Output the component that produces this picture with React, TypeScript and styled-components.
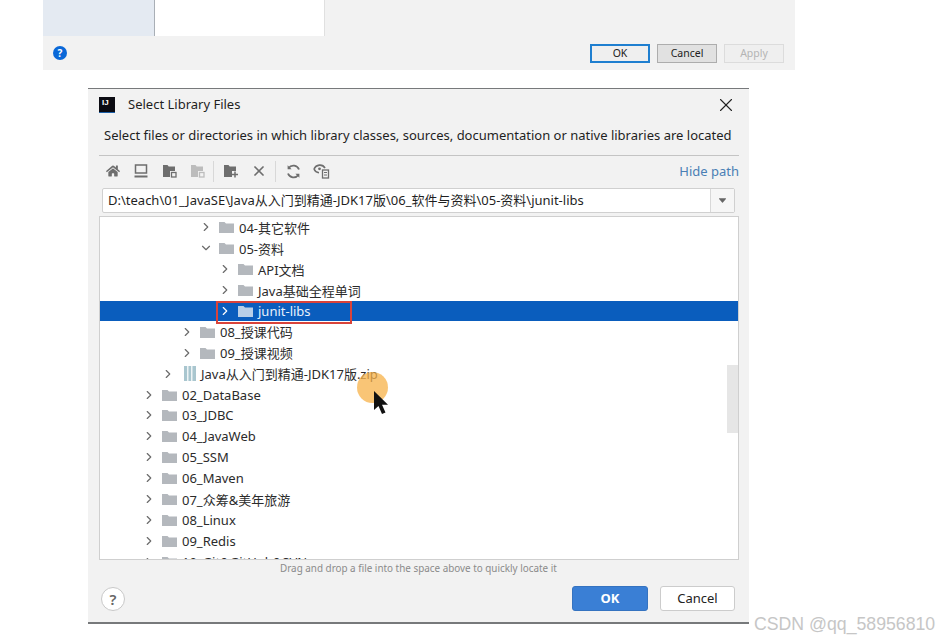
import styled, { createGlobalStyle } from 'styled-components';
import { FaHome } from 'react-icons/fa';
import { FiChevronDown, FiChevronRight, FiX } from 'react-icons/fi';
import { IoCaretDown } from 'react-icons/io5';

const GlobalStyle = createGlobalStyle`
  html, body {
    margin: 0;
    padding: 0;
    background: #fff;
    overflow: hidden;
  }
  body {
    font-family: "Noto Sans", "Noto Sans CJK SC", sans-serif;
  }
`;

const Page = styled.div`
  position: relative;
  width: 939px;
  height: 639px;
  display: flex;
  flex-direction: column;
  overflow: hidden;
`;

/* settings window that sits behind the dialog */
const BackWindow = styled.div`
  width: 752px;
  height: 70px;
  margin-left: 43px;
  display: flex;
  flex-direction: column;
  background: #f2f2f2;
`;

const BackTop = styled.div`
  height: 36px;
  display: flex;
`;

const BackSide = styled.div`
  width: 111px;
  background: #e4eaf2;
  border-right: 1px solid #a9afb6;
`;

const BackContent = styled.div`
  width: 169px;
  background: #fff;
  border-right: 1px solid #e0e0e0;
`;

const BackFooter = styled.div`
  flex: 1;
  display: flex;
  align-items: center;
  padding: 0 11px 0 10px;
  gap: 7px;
`;

const BackHelp = styled.div`
  width: 14px;
  height: 14px;
  border-radius: 50%;
  background: #0a68d8;
  color: #fff;
  font-size: 10px;
  font-weight: 700;
  line-height: 14px;
  text-align: center;
  margin-right: auto;
`;

const BackButton = styled.div<{ $kind: 'primary' | 'normal' | 'disabled' }>`
  box-sizing: border-box;
  width: 60px;
  height: 19px;
  font-size: 10.5px;
  line-height: 15px;
  text-align: center;
  border: ${({ $kind }) => ($kind === 'primary' ? '2px solid #1f7fd0' : $kind === 'normal' ? '1px solid #adadad' : '1px solid #dcdcdc')};
  background: ${({ $kind }) => ($kind === 'normal' ? '#e1e1e1' : '#efefef')};
  color: ${({ $kind }) => ($kind === 'disabled' ? '#b4b4b4' : '#222')};
  padding-top: ${({ $kind }) => ($kind === 'primary' ? '0' : '1px')};
`;

const Dialog = styled.div`
  box-sizing: border-box;
  width: 661px;
  height: 536px;
  margin: 18px 0 0 88px;
  display: flex;
  flex-direction: column;
  background: #f2f2f2;
  border-top: 1px solid #77797b;
  border-bottom: 2px solid #77797b;
  color: #1f1f1f;
  font-size: 13px;
`;

const TitleBar = styled.div`
  box-sizing: border-box;
  height: 31px;
  display: flex;
  align-items: center;
  padding: 0 12px 0 11px;
  gap: 13px;
`;

const Logo = styled.div`
  width: 16px;
  height: 16px;
  background: #0b0b12;
  color: #fff;
  font-family: "Liberation Sans", sans-serif;
  font-size: 8px;
  font-weight: 700;
  line-height: 11px;
  padding-left: 3px;
  box-sizing: border-box;
  border-bottom: 1px solid #1c5fa8;
`;

const Title = styled.span`
  flex: 1;
  font-size: 13px;
  line-height: 16px;
  padding-bottom: 2px;
`;

const CloseButton = styled.div`
  display: flex;
  color: #222;
  font-size: 22px;
`;

const Description = styled.div`
  height: 35px;
  padding-left: 16px;
  box-sizing: border-box;
  line-height: 30px;
  font-size: 13px;
  white-space: nowrap;
`;

const Toolbar = styled.div`
  box-sizing: border-box;
  height: 33px;
  margin: 0 10px 0 11px;
  border-top: 1px solid #c4c4c4;
  display: flex;
  align-items: center;
  padding: 0 0 2px 4px;
`;

const ToolButton = styled.div<{ $faded?: boolean }>`
  width: 20px;
  height: 20px;
  margin-right: 8px;
  display: flex;
  align-items: center;
  justify-content: center;
  color: #6e6e6e;
  opacity: ${({ $faded }) => ($faded ? 0.4 : 1)};
`;

const ToolSeparator = styled.div`
  width: 1px;
  height: 21px;
  background: #d8d8d8;
  margin: 0 7px 0 -2px;
`;

const HidePath = styled.span`
  margin-left: auto;
  color: #4a7fb5;
  font-size: 13px;
`;

const PathBox = styled.div`
  box-sizing: border-box;
  height: 25px;
  margin: 0 14px 3px 14px;
  display: flex;
  align-items: stretch;
  background: #fff;
  border: 1px solid #d0d0d0;
  border-radius: 2px;
`;

const PathText = styled.div`
  flex: 1;
  padding-left: 5px;
  font-size: 13px;
  line-height: 23px;
  white-space: nowrap;
`;

const PathArrow = styled.div`
  width: 23px;
  border-left: 1px solid #d8d8d8;
  background: #f6f6f6;
  display: flex;
  align-items: center;
  justify-content: center;
  color: #666;
  font-size: 11px;
`;

const Tree = styled.div`
  position: relative;
  box-sizing: border-box;
  height: 344px;
  margin: 0 10px 0 11px;
  background: #fff;
  border: 1px solid #cfcfcf;
  overflow: hidden;
`;

const Row = styled.div<{ $depth: number; $selected?: boolean }>`
  position: relative;
  height: 20.9px;
  display: flex;
  align-items: center;
  padding-left: ${({ $depth }) => 42 + $depth * 19}px;
  background: ${({ $selected }) => ($selected ? '#0a5dbd' : 'transparent')};
  color: ${({ $selected }) => ($selected ? '#e8f1fb' : '#2b2b2b')};
  font-size: 13px;
  white-space: nowrap;
`;

const Chevron = styled.span<{ $selected?: boolean }>`
  width: 20px;
  display: flex;
  font-size: 14px;
  color: ${({ $selected }) => ($selected ? '#fff' : '#6b6b6b')};
`;

const RowIcon = styled.span<{ $zip?: boolean }>`
  display: flex;
  margin: ${({ $zip }) => ($zip ? '0 5px 0 3px' : '0 5px 0 0')};
`;

const RedMark = styled.div`
  position: absolute;
  left: 116px;
  top: 0;
  width: 136px;
  height: 23px;
  box-sizing: border-box;
  border: 2px solid #d9433a;
`;

const ScrollThumb = styled.div`
  position: absolute;
  right: 0;
  top: 148px;
  width: 11px;
  height: 68px;
  background: #e6e6e6;
`;

const DropHint = styled.div`
  height: 17px;
  padding-left: 192px;
  color: #8a8a8a;
  font-size: 9.9px;
  line-height: 17px;
  white-space: nowrap;
`;

const DialogFooter = styled.div`
  box-sizing: border-box;
  display: flex;
  align-items: center;
  gap: 12px;
  padding: 8px 14px 0 13px;
  height: 35px;
`;

const HelpButton = styled.div`
  box-sizing: border-box;
  width: 24px;
  height: 24px;
  border-radius: 50%;
  background: #fff;
  border: 1px solid #c8c8c8;
  color: #666;
  font-size: 15px;
  font-weight: 600;
  line-height: 22px;
  text-align: center;
  margin-right: auto;
`;

const DialogButton = styled.div<{ $primary?: boolean }>`
  box-sizing: border-box;
  width: ${({ $primary }) => ($primary ? '76px' : '75px')};
  height: 25px;
  border-radius: 3px;
  line-height: 23px;
  text-align: center;
  font-size: 13px;
  font-weight: ${({ $primary }) => ($primary ? 700 : 400)};
  background: ${({ $primary }) => ($primary ? '#3a7fd5' : '#fff')};
  color: ${({ $primary }) => ($primary ? '#fff' : '#222')};
  border: 1px solid ${({ $primary }) => ($primary ? '#3573c0' : '#cccccc')};
`;

const Watermark = styled.div`
  position: absolute;
  left: 754px;
  top: 613px;
  color: #c6c6c6;
  font-family: "Liberation Sans", sans-serif;
  font-size: 17.7px;
  line-height: 22px;
  white-space: nowrap;
`;

const PointerHalo = styled.div`
  position: absolute;
  left: 357px;
  top: 372px;
  width: 31px;
  height: 31px;
  border-radius: 50%;
  background: rgba(247, 178, 72, 0.75);
`;

const PointerArrow = styled.svg`
  position: absolute;
  left: 373px;
  top: 390px;
`;

const FolderIcon = ({ selected }: { selected?: boolean }) => (
  <svg width="15" height="12" viewBox="0 0 15 12">
    <path d="M0 1h5.5l1.5 1.6h8V12H0z" fill={selected ? '#b8cfe8' : '#b4b8bd'} />
  </svg>
);

const ZipIcon = () => (
  <svg width="12" height="15" viewBox="0 0 12 15">
    <rect x="0" y="0" width="12" height="15" fill="#a9c6cf" />
    <rect x="3" y="0" width="1.5" height="15" fill="#eef4f6" />
    <rect x="7" y="0" width="1.5" height="15" fill="#eef4f6" />
  </svg>
);

const DesktopIcon = () => (
  <svg width="14" height="14" viewBox="0 0 14 14" fill="none" stroke="#6e6e6e" strokeWidth="1.5">
    <rect x="1.5" y="1" width="11" height="8" />
    <path d="M0.5 12.5h13" strokeWidth="2" />
  </svg>
);

const FolderBadgeIcon = () => (
  <svg width="15" height="14" viewBox="0 0 15 14" fill="#6e6e6e">
    <path d="M1 1h4.5l1.2 1.5H13V7H8v6H1z" />
    <rect x="9.5" y="8.5" width="4.5" height="4.5" fill="none" stroke="#6e6e6e" strokeWidth="1.3" />
  </svg>
);

const FolderPlusIcon = () => (
  <svg width="16" height="14" viewBox="0 0 16 14" fill="#6e6e6e">
    <path d="M1 1h4.5l1.2 1.5H13V7H9v6H1z" />
    <path d="M12 7.5v6M9 10.5h6" stroke="#6e6e6e" strokeWidth="1.5" />
  </svg>
);

const RefreshIcon = () => (
  <svg width="15" height="15" viewBox="0 0 15 15" fill="none" stroke="#6e6e6e" strokeWidth="1.8">
    <path d="M13 5.5A6 6 0 0 0 2.6 4" />
    <path d="M2 9.5A6 6 0 0 0 12.4 11" />
    <path d="M1.6 1.2v4h4z" fill="#6e6e6e" stroke="none" />
    <path d="M13.4 13.8v-4h-4z" fill="#6e6e6e" stroke="none" />
  </svg>
);

const EyeFileIcon = () => (
  <svg width="17" height="16" viewBox="0 0 17 16" fill="none" stroke="#6e6e6e" strokeWidth="1.6">
    <path d="M1 6c2-4.5 8.5-5.5 11 -1" />
    <path d="M1 6c1 2.4 3 3.6 5 3.8" />
    <circle cx="6.5" cy="5.8" r="1.4" fill="#6e6e6e" stroke="none" />
    <rect x="9.5" y="7" width="6" height="8" strokeWidth="1.3" />
    <path d="M11 9.5h3M11 12h3" strokeWidth="1" />
  </svg>
);

type TreeItem = {
  label: string;
  depth: number;
  open?: boolean;
  selected?: boolean;
  zip?: boolean;
};

const items: TreeItem[] = [
  { label: '04-其它软件', depth: 3 },
  { label: '05-资料', depth: 3, open: true },
  { label: 'API文档', depth: 4 },
  { label: 'Java基础全程单词', depth: 4 },
  { label: 'junit-libs', depth: 4, selected: true },
  { label: '08_授课代码', depth: 2 },
  { label: '09_授课视频', depth: 2 },
  { label: 'Java从入门到精通-JDK17版.zip', depth: 1, zip: true },
  { label: '02_DataBase', depth: 0 },
  { label: '03_JDBC', depth: 0 },
  { label: '04_JavaWeb', depth: 0 },
  { label: '05_SSM', depth: 0 },
  { label: '06_Maven', depth: 0 },
  { label: '07_众筹&美年旅游', depth: 0 },
  { label: '08_Linux', depth: 0 },
  { label: '09_Redis', depth: 0 },
  { label: '10_Git&GitHub&SVN', depth: 0 },
];

const App = () => {
  return (
    <Page>
      <GlobalStyle />
      <BackWindow>
        <BackTop>
          <BackSide />
          <BackContent />
        </BackTop>
        <BackFooter>
          <BackHelp>?</BackHelp>
          <BackButton $kind="primary">OK</BackButton>
          <BackButton $kind="normal">Cancel</BackButton>
          <BackButton $kind="disabled">Apply</BackButton>
        </BackFooter>
      </BackWindow>

      <Dialog>
        <TitleBar>
          <Logo>IJ</Logo>
          <Title>Select Library Files</Title>
          <CloseButton><FiX strokeWidth={1.2} /></CloseButton>
        </TitleBar>
        <Description>Select files or directories in which library classes, sources, documentation or native libraries are located</Description>
        <Toolbar>
          <ToolButton><FaHome size={14} /></ToolButton>
          <ToolButton><DesktopIcon /></ToolButton>
          <ToolButton><FolderBadgeIcon /></ToolButton>
          <ToolButton $faded><FolderBadgeIcon /></ToolButton>
          <ToolSeparator />
          <ToolButton><FolderPlusIcon /></ToolButton>
          <ToolButton><FiX size={16} strokeWidth={2.6} /></ToolButton>
          <ToolSeparator />
          <ToolButton><RefreshIcon /></ToolButton>
          <ToolButton><EyeFileIcon /></ToolButton>
          <HidePath>Hide path</HidePath>
        </Toolbar>
        <PathBox>
          <PathText>D:\teach\01_JavaSE\Java从入门到精通-JDK17版\06_软件与资料\05-资料\junit-libs</PathText>
          <PathArrow><IoCaretDown /></PathArrow>
        </PathBox>
        <Tree>
          {items.map((item) => (
            <Row key={item.label} $depth={item.depth} $selected={item.selected}>
              <Chevron $selected={item.selected}>
                {item.open ? <FiChevronDown /> : <FiChevronRight />}
              </Chevron>
              <RowIcon $zip={item.zip}>{item.zip ? <ZipIcon /> : <FolderIcon selected={item.selected} />}</RowIcon>
              {item.label}
              {item.selected && <RedMark />}
            </Row>
          ))}
          <ScrollThumb />
        </Tree>
        <DropHint>Drag and drop a file into the space above to quickly locate it</DropHint>
        <DialogFooter>
          <HelpButton>?</HelpButton>
          <DialogButton $primary>OK</DialogButton>
          <DialogButton>Cancel</DialogButton>
        </DialogFooter>
      </Dialog>

      <PointerHalo />
      <PointerArrow width="16" height="27" viewBox="0 0 16 27">
        <path d="M1 1v19l4.5-4 3.5 8 3.5-1.6-3.5-7.6h6z" fill="#111" />
      </PointerArrow>
      <Watermark>CSDN @qq_58956810</Watermark>
    </Page>
  );
};

export default App;
